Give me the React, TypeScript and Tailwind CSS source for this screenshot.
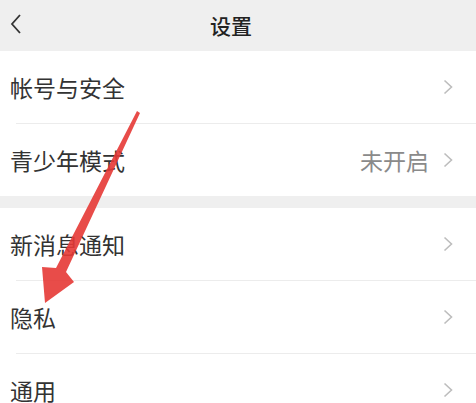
import React from 'react';

const font = { fontFamily: '"Noto Sans CJK SC", "Noto Sans", sans-serif' };

type Item = { label: string; value?: string };

const groups: Item[][] = [
  [{ label: '帐号与安全' }, { label: '青少年模式', value: '未开启' }],
  [{ label: '新消息通知' }, { label: '隐私' }, { label: '通用' }],
];

const Chevron = () => (
  <svg width="10" height="16" viewBox="0 0 10 16" className="ml-[14px] shrink-0">
    <path d="M1.5 1.5 L8.5 8 L1.5 14.5" fill="none" stroke="#bdbdbd" strokeWidth="1.6" />
  </svg>
);

const Row: React.FC<{ item: Item; last: boolean }> = ({ item, last }) => (
  <div className="bg-white">
    <div className="flex h-[72px] items-center pl-[10px] pr-[23px]">
      <span className="text-[23px] leading-none text-[#333333]">{item.label}</span>
      <div className="flex-1" />
      {item.value && <span className="text-[23px] leading-none text-[#8a8a8a]">{item.value}</span>}
      <Chevron />
    </div>
    {!last && <div className="ml-4 h-px bg-[#ececec]" />}
  </div>
);

export default function App() {
  return (
    <div className="relative h-[403px] w-[476px] overflow-hidden bg-[#efefef]" style={font}>
      <div className="relative flex h-[51px] items-center justify-center bg-[#efefef] pr-[14px]">
        <svg width="14" height="22" viewBox="0 0 14 22" className="absolute left-[9px] top-[13px]">
          <path d="M11 2 L3 11 L11 20" fill="none" stroke="#333" strokeWidth="1.8" />
        </svg>
        <span className="text-[21px] font-medium text-[#222]">设置</span>
      </div>
      <div className="flex flex-col gap-[12px]">
        {groups.map((g, gi) => (
          <div key={gi}>
            {g.map((item, i) => (
              <Row key={item.label} item={item} last={i === g.length - 1} />
            ))}
          </div>
        ))}
      </div>
      <svg className="pointer-events-none absolute left-0 top-0" width="476" height="403" viewBox="0 0 476 403">
        <path d="M137 111 L140 113 L66 272 L74 282 L45 303 L42 267 L56 268 Z" fill="#e53935" opacity="0.9" />
      </svg>
    </div>
  );
}
